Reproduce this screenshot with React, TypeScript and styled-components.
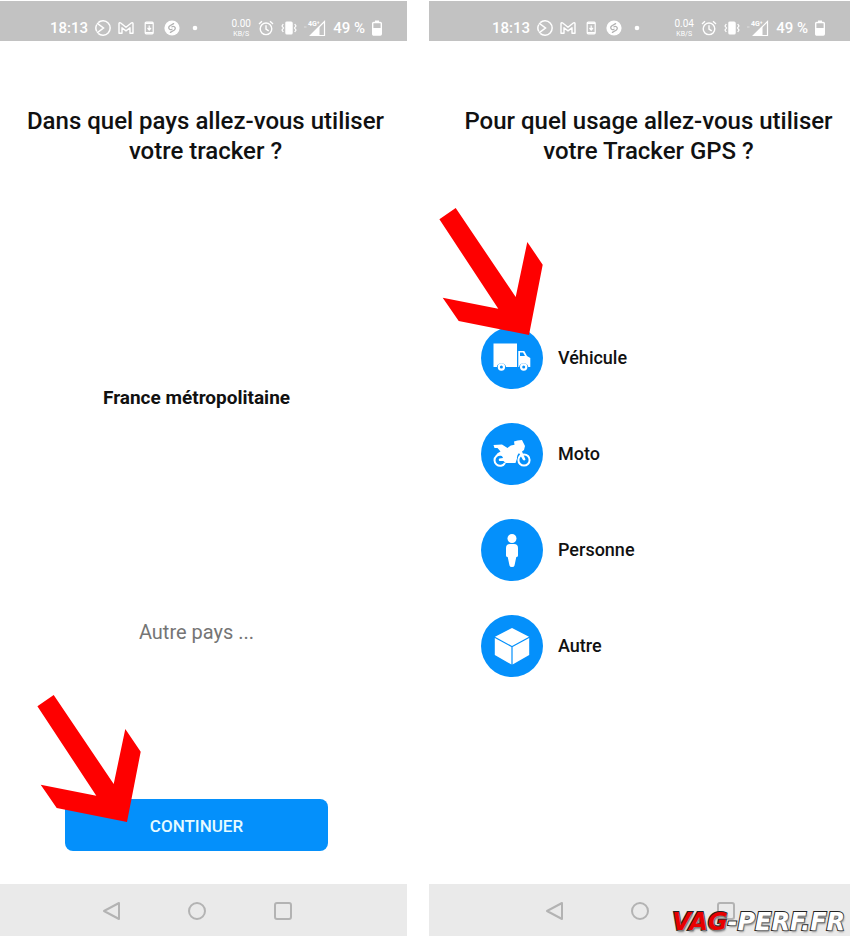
import React from 'react';
import styled, { createGlobalStyle } from 'styled-components';

const GlobalStyle = createGlobalStyle`
  * { box-sizing: border-box; }
  body { margin: 0; background: #fff; font-family: Roboto, "Noto Sans", sans-serif; color: #111; }
`;

const Page = styled.div`
  position: relative;
  display: grid;
  grid-template-columns: 407fr 421fr;
  column-gap: 22px;
  min-height: 100vh;
  background: #fff;
`;

const Phone = styled.section`
  display: flex;
  flex-direction: column;
  padding-top: 1px;
`;

const StatusBar = styled.header<{ $start: number }>`
  display: flex;
  justify-content: space-between;
  align-items: center;
  height: 40px;
  padding: 13px 25px 0 ${p => p.$start}px;
  background: #c2c2c2;
  color: #fff;
  font-size: 15px;
  font-weight: 500;
  line-height: 20px;
`;

const StatusGroup = styled.div`
  display: flex;
  align-items: center;
  gap: 7px;
  svg { display: block; }
`;

const Speed = styled.div`
  display: flex;
  flex-direction: column;
  align-items: center;
  width: 20px;
  font-size: 10px;
  line-height: 12px;
  font-weight: 400;
  small { font-size: 7px; line-height: 8px; }
`;

const Screen = styled.main<{ $end: number }>`
  flex: 1;
  display: flex;
  flex-direction: column;
  align-items: center;
  padding: 65px ${p => p.$end}px 33px 0;
`;

const Title = styled.h1`
  margin: 0;
  padding-left: 18px;
  font-size: 24px;
  line-height: 30px;
  font-weight: 500;
  text-align: center;
`;

const Country = styled.p`
  margin: 220px 0 0;
  font-size: 19px;
  line-height: 24px;
  font-weight: 700;
`;

const OtherCountry = styled.button`
  margin: 210px 0 0;
  padding: 0;
  border: 0;
  background: none;
  color: #757575;
  font: 400 20px/24px Roboto, sans-serif;
`;

const ContinueArea = styled.div`
  position: relative;
  width: 67%;
  margin-top: auto;
`;

const ContinueButton = styled.button`
  display: block;
  width: 100%;
  height: 52px;
  padding: 2px 0 0;
  border: 0;
  border-radius: 8px;
  background: #0490fb;
  color: #e6fbff;
  font: 500 17px/24px Roboto, sans-serif;
`;

const Arrow = styled.svg<{ $left: number; $top: number }>`
  position: absolute;
  left: ${p => p.$left}px;
  top: ${p => p.$top}px;
  width: 104px;
  height: 128px;
  pointer-events: none;
`;

const Choices = styled.ul`
  align-self: stretch;
  display: flex;
  flex-direction: column;
  gap: 34px;
  margin: 161px 0 0;
  padding: 0 0 0 52px;
  list-style: none;
`;

const Choice = styled.button`
  position: relative;
  display: flex;
  align-items: center;
  gap: 15px;
  padding: 0;
  border: 0;
  background: none;
  color: #111;
  font: 500 18px/24px Roboto, sans-serif;
`;

const Disc = styled.span`
  display: block;
  width: 62px;
  height: 62px;
  border-radius: 50%;
  background: #0490fb;
  svg { display: block; }
`;

const NavBar = styled.nav<{ $end: number }>`
  display: flex;
  justify-content: center;
  align-items: center;
  gap: 62px;
  height: 52px;
  padding: 2px ${p => p.$end}px 0 0;
  background: #eaeaea;
`;

const NavButton = styled.button`
  width: 24px;
  height: 24px;
  padding: 0;
  border: 0;
  background: none;
  svg { display: block; }
`;

const Watermark = styled.div`
  position: absolute;
  right: 5px;
  bottom: 0;
  color: #fff;
  font: italic 700 24px/28px "DejaVu Sans", sans-serif;
  -webkit-text-stroke: 2px #222;
  paint-order: stroke fill;
  text-shadow: 1px 2px 2px #888;
  white-space: nowrap;
  b { color: #e80000; }
`;

function RedArrow({ left, top }: { left: number; top: number }) {
  return (
    <Arrow $left={left} $top={top} viewBox="0 0 104 128" aria-hidden="true">
      <path fill="#fe0000" d="M.4 11.3 16.7 0l60 89 11.6-55 15.4 22.7L90 127l-70.3-14L3.7 89.7l55.6 11Z" />
    </Arrow>
  );
}

function Status({ speed, start }: { speed: string; start: number }) {
  return (
    <StatusBar $start={start}>
      <StatusGroup>
        <span>18:13</span>
        <svg width="16" height="16" viewBox="0 0 16 16" fill="none" stroke="#fff" strokeWidth="1.5">
          <path d="M3.200 2.600A7.200 7.200 0 1 1 3.200 13.400M1.800 4.500A7.200 7.200 0 0 0 1.800 11.500M2 3.200 8.500 8 2 12.800" />
        </svg>
        <svg width="16" height="16" viewBox="0 0 16 16" fill="none" stroke="#fff" strokeWidth="1.4" strokeLinejoin="round">
          <path d="M1 13.2V3.6Q1 2.4 2.4 2.8L8 7.2l5.6-4.4q1.4-.4 1.4.8v9.6h-3V7.8l-4 3.1-4-3.1v5.4Z" />
        </svg>
        <svg width="16" height="16" viewBox="0 0 16 16" fill="none" stroke="#fff">
          <rect x="4.200" y="2.2" width="8" height="11.6" rx="1" strokeWidth="1.2" />
          <path d="M4 3.2h8M4 12.8h8" strokeWidth="1.4" />
          <path d="M8.200 5.5v4M6.500 8l1.700 2L10 8" strokeWidth="1.2" />
        </svg>
        <svg width="16" height="16" viewBox="0 0 16 16">
          <circle cx="8" cy="8" r="7.6" fill="#fff" />
          <path d="M9.600 3.600 5.600 6Q3.800 7.700 5.600 9.200q1.200.8 2.400 0M6.400 12.400 10.400 10q1.800-1.700 0-3.200Q9.200 6 8 6.800" fill="none" stroke="#b4b4b4" strokeWidth="1.300" strokeLinecap="round" />
        </svg>
        <svg width="16" height="16" viewBox="0 0 16 16"><circle cx="8" cy="8" r="2.300" fill="#fff" /></svg>
      </StatusGroup>
      <StatusGroup>
        <Speed>{speed}<small>KB/S</small></Speed>
        <svg width="16" height="16" viewBox="0 0 16 16" fill="none" stroke="#fff" strokeWidth="1.4">
          <circle cx="8" cy="8.800" r="5.800" /><path d="M8 5.300v3.800l2.700 1.700M1 4l3-2.700M15 4l-3-2.700" />
        </svg>
        <svg width="16" height="16" viewBox="0 0 16 16" fill="none" stroke="#fff" strokeWidth="1.200">
          <rect x="4.900" y="2" width="6.200" height="12" rx="1" fill="#fff" /><path d="m2.300 4-1.300 2 1.500 2L1 10l1.300 2M13.700 4 15 6l-1.500 2 1.500 2-1.300 2" />
        </svg>
        <svg width="22" height="18" viewBox="0 0 22 18">
          <path d="M0 8h2.500" stroke="#dedede" />
          <path d="M6.500 16.500 20.500 2.500v14Z" fill="none" stroke="#fff" strokeWidth="1.200" />
          <path d="M6 16.500 15.500 7v9.500Z" fill="#fff" />
          <text x="4" y="7" fill="#fff" fontSize="7" fontFamily="Roboto" fontWeight="700">4G⁺</text>
        </svg>
        <span>49 %</span>
        <svg width="10" height="16" viewBox="0 0 10 16">
          <path d="M3 .5h4v1.700H3Z" fill="#fff" /><rect x=".7" y="2.500" width="8.600" height="12.500" rx="1" fill="none" stroke="#fff" strokeWidth="1.400" /><path d="M1 8h8v7H1Z" fill="#fff" />
        </svg>
      </StatusGroup>
    </StatusBar>
  );
}

function Navigation({ end }: { end: number }) {
  return (
    <NavBar $end={end} aria-label="Navigation">
      <NavButton aria-label="Retour"><svg width="24" height="24" viewBox="0 0 24 24" fill="none" stroke="#b3b3b3" strokeWidth="2" strokeLinejoin="round"><path d="M5 12 20 4v16Z" /></svg></NavButton>
      <NavButton aria-label="Accueil"><svg width="24" height="24" viewBox="0 0 24 24" fill="none" stroke="#b3b3b3" strokeWidth="2"><circle cx="12" cy="12" r="8" /></svg></NavButton>
      <NavButton aria-label="Applications"><svg width="24" height="24" viewBox="0 0 24 24" fill="none" stroke="#b3b3b3" strokeWidth="2"><rect x="4" y="4" width="16" height="16" rx="2" /></svg></NavButton>
    </NavBar>
  );
}

const TruckIcon = () => (
  <svg width="62" height="62" viewBox="0 0 62 62" fill="#fff">
    <path d="M12.500 16.500h23.500v23.500H25A4.700 4.700 0 0 0 15.800 40H12.500Z" />
    <path fillRule="evenodd" d="M37.300 24h6l2.700 5 3.300 2v9h-2a4.700 4.700 0 0 0-9.200 0h-.8ZM39 25.500V29h5l-2-3.500Z" />
    <circle cx="20.400" cy="40" r="3.700" /><circle cx="42.700" cy="40" r="3.700" />
    <circle cx="20.400" cy="40" r="1.500" fill="#0490fb" /><circle cx="42.700" cy="40" r="1.500" fill="#0490fb" />
  </svg>
);

const MotoIcon = () => (
  <svg width="62" height="62" viewBox="0 0 62 62" fill="#fff">
    <path d="M24 34.500A5.600 5.600 0 1 0 24 40" fill="none" stroke="#fff" strokeWidth="2" />
    <circle cx="43" cy="37" r="5.600" fill="none" stroke="#fff" strokeWidth="2" />
    <path d="M12.500 22 21 21.500l5.500 3.500q2.500-3 7-3.200L33 18.500q3-1.500 8-1.500l3 6-1 4-2 1.500 3.500 8q-1 1.500-2.500.5l-4-7q-2.500 2.500-2 5.500l-1.500 4.500H24.500L22.500 38H18.500q-1.500-1.500 0-2.500l3.500-.5-1.500-3.500-6 1.500q1.500-3.500 5-4.500l-3-3.500h-3Z" />
  </svg>
);

const PersonIcon = () => (
  <svg width="62" height="62" viewBox="0 0 62 62" fill="#fff">
    <circle cx="31" cy="19.500" r="4.500" />
    <path d="M29 25h4q4 0 4 4v7.500q0 1.500-1.700 1.500L33.500 46.500q-.3 1.500-2.500 1.500T28.500 46.500l-1.800-8.500Q25 38 25 36.500v-7.500q0-4 4-4Z" />
  </svg>
);

const CubeIcon = () => (
  <svg width="62" height="62" viewBox="0 0 62 62" fill="#fff">
    <path d="M31 13 48 21.800 31 31 14 21.800ZM13.800 23 30.400 32v17.500L13.800 40ZM48.200 23 31.600 32v17.500L48.200 40Z" />
  </svg>
);

const choices = [
  { label: 'Véhicule', Icon: TruckIcon },
  { label: 'Moto', Icon: MotoIcon },
  { label: 'Personne', Icon: PersonIcon },
  { label: 'Autre', Icon: CubeIcon },
];

export default function App() {
  return (
    <>
      <GlobalStyle />
      <Page>
        <Phone>
          <Status speed="0.00" start={50} />
          <Screen $end={14}>
            <Title>Dans quel pays allez-vous utiliser<br />votre tracker ?</Title>
            <Country>France métropolitaine</Country>
            <OtherCountry>Autre pays ...</OtherCountry>
            <ContinueArea>
              <ContinueButton>CONTINUER</ContinueButton>
              <RedArrow left={-28} top={-104} />
            </ContinueArea>
          </Screen>
          <Navigation end={14} />
        </Phone>
        <Phone>
          <Status speed="0.04" start={63} />
          <Screen $end={0}>
            <Title>Pour quel usage allez-vous utiliser<br />votre Tracker GPS ?</Title>
            <Choices>
              {choices.map(({ label, Icon }, i) => (
                <li key={label}>
                  <Choice>
                    <Disc><Icon /></Disc>
                    {label}
                    {i === 0 && <RedArrow left={-42} top={-119} />}
                  </Choice>
                </li>
              ))}
            </Choices>
          </Screen>
          <Navigation end={0} />
        </Phone>
        <Watermark><b>VAG</b>-PERF.FR</Watermark>
      </Page>
    </>
  );
}
